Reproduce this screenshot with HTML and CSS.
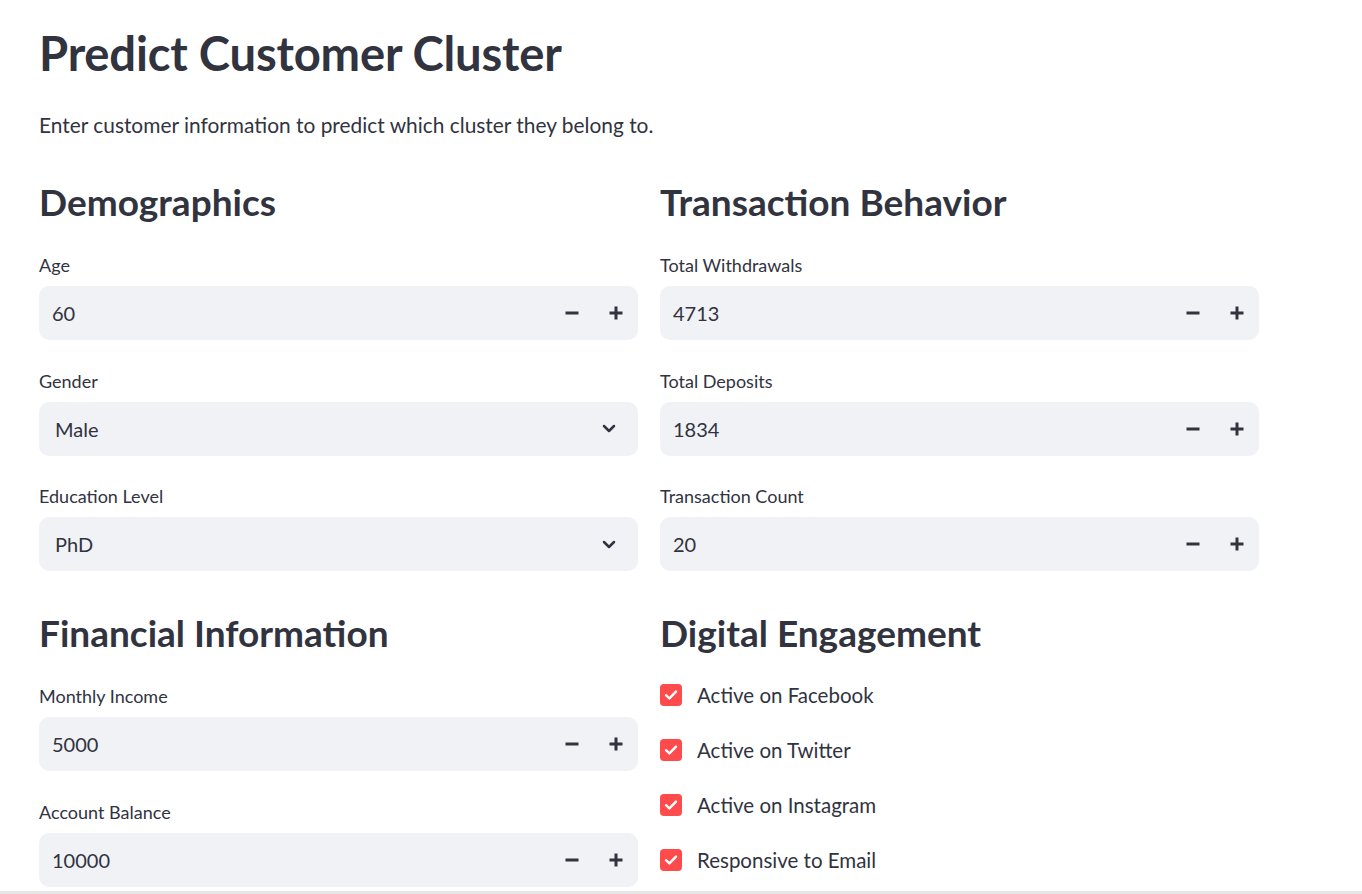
FILE: index.html
```html
<!DOCTYPE html>
<html lang="en">
<head>
<meta charset="utf-8">
<title>Predict Customer Cluster</title>
<link rel="stylesheet" href="styles.css">
</head>
<body>
<main class="main">
  <h1 class="title">Predict Customer Cluster</h1>
  <p class="intro">Enter customer information to predict which cluster they belong to.</p>

  <div class="grid">
    <section class="col">
      <h2 class="heading">Demographics</h2>
      <div class="field">
        <div class="label">Age</div>
        <div class="box num"><span class="val">60</span><span class="step"><svg width="14" height="14" viewBox="0 0 14 14"><rect x="0.5" y="5.5" width="13" height="3" fill="#31333F"/></svg></span><span class="step"><svg width="14" height="14" viewBox="0 0 14 14"><rect x="0.5" y="5.5" width="13" height="3" fill="#31333F"/><rect x="5.5" y="0.5" width="3" height="13" fill="#31333F"/></svg></span></div>
      </div>
      <div class="field">
        <div class="label">Gender</div>
        <div class="box sel"><span class="val">Male</span><span class="chev"><svg width="14" height="9" viewBox="0 0 14 9"><path d="M2 2 L7 7 L12 2" fill="none" stroke="#31333F" stroke-width="2.5" stroke-linecap="round" stroke-linejoin="round"/></svg></span></div>
      </div>
      <div class="field">
        <div class="label">Education Level</div>
        <div class="box sel"><span class="val">PhD</span><span class="chev"><svg width="14" height="9" viewBox="0 0 14 9"><path d="M2 2 L7 7 L12 2" fill="none" stroke="#31333F" stroke-width="2.5" stroke-linecap="round" stroke-linejoin="round"/></svg></span></div>
      </div>
    </section>

    <section class="col">
      <h2 class="heading">Transaction Behavior</h2>
      <div class="field">
        <div class="label">Total Withdrawals</div>
        <div class="box num"><span class="val">4713</span><span class="step"><svg width="14" height="14" viewBox="0 0 14 14"><rect x="0.5" y="5.5" width="13" height="3" fill="#31333F"/></svg></span><span class="step"><svg width="14" height="14" viewBox="0 0 14 14"><rect x="0.5" y="5.5" width="13" height="3" fill="#31333F"/><rect x="5.5" y="0.5" width="3" height="13" fill="#31333F"/></svg></span></div>
      </div>
      <div class="field">
        <div class="label">Total Deposits</div>
        <div class="box num"><span class="val">1834</span><span class="step"><svg width="14" height="14" viewBox="0 0 14 14"><rect x="0.5" y="5.5" width="13" height="3" fill="#31333F"/></svg></span><span class="step"><svg width="14" height="14" viewBox="0 0 14 14"><rect x="0.5" y="5.5" width="13" height="3" fill="#31333F"/><rect x="5.5" y="0.5" width="3" height="13" fill="#31333F"/></svg></span></div>
      </div>
      <div class="field">
        <div class="label">Transaction Count</div>
        <div class="box num"><span class="val">20</span><span class="step"><svg width="14" height="14" viewBox="0 0 14 14"><rect x="0.5" y="5.5" width="13" height="3" fill="#31333F"/></svg></span><span class="step"><svg width="14" height="14" viewBox="0 0 14 14"><rect x="0.5" y="5.5" width="13" height="3" fill="#31333F"/><rect x="5.5" y="0.5" width="3" height="13" fill="#31333F"/></svg></span></div>
      </div>
    </section>

    <section class="col row2">
      <h2 class="heading">Financial Information</h2>
      <div class="field">
        <div class="label">Monthly Income</div>
        <div class="box num"><span class="val">5000</span><span class="step"><svg width="14" height="14" viewBox="0 0 14 14"><rect x="0.5" y="5.5" width="13" height="3" fill="#31333F"/></svg></span><span class="step"><svg width="14" height="14" viewBox="0 0 14 14"><rect x="0.5" y="5.5" width="13" height="3" fill="#31333F"/><rect x="5.5" y="0.5" width="3" height="13" fill="#31333F"/></svg></span></div>
      </div>
      <div class="field">
        <div class="label">Account Balance</div>
        <div class="box num"><span class="val">10000</span><span class="step"><svg width="14" height="14" viewBox="0 0 14 14"><rect x="0.5" y="5.5" width="13" height="3" fill="#31333F"/></svg></span><span class="step"><svg width="14" height="14" viewBox="0 0 14 14"><rect x="0.5" y="5.5" width="13" height="3" fill="#31333F"/><rect x="5.5" y="0.5" width="3" height="13" fill="#31333F"/></svg></span></div>
      </div>
    </section>

    <section class="col row2">
      <h2 class="heading">Digital Engagement</h2>
      <div class="checks">
        <label class="check"><span class="cb"><svg width="14" height="12" viewBox="0 0 14 12"><path d="M2 6.2 L5.4 9.4 L12 2.6" fill="none" stroke="#fff" stroke-width="2.4" stroke-linecap="round" stroke-linejoin="round"/></svg></span><span class="ctext">Active on Facebook</span></label>
        <label class="check"><span class="cb"><svg width="14" height="12" viewBox="0 0 14 12"><path d="M2 6.2 L5.4 9.4 L12 2.6" fill="none" stroke="#fff" stroke-width="2.4" stroke-linecap="round" stroke-linejoin="round"/></svg></span><span class="ctext">Active on Twitter</span></label>
        <label class="check"><span class="cb"><svg width="14" height="12" viewBox="0 0 14 12"><path d="M2 6.2 L5.4 9.4 L12 2.6" fill="none" stroke="#fff" stroke-width="2.4" stroke-linecap="round" stroke-linejoin="round"/></svg></span><span class="ctext">Active on Instagram</span></label>
        <label class="check"><span class="cb"><svg width="14" height="12" viewBox="0 0 14 12"><path d="M2 6.2 L5.4 9.4 L12 2.6" fill="none" stroke="#fff" stroke-width="2.4" stroke-linecap="round" stroke-linejoin="round"/></svg></span><span class="ctext">Responsive to Email</span></label>
      </div>
    </section>
  </div>
</main>
<div class="edge"></div>
</body>
</html>
```

FILE: styles.css
```css
html, body {
  margin: 0;
  padding: 0;
  background: #ffffff;
}
body {
  font-family: Lato, "Noto Sans", sans-serif;
  color: #31333F;
  overflow: hidden;
  height: 894px;
}
.main {
  width: 1220px;
  padding: 0 0 0 39px;
}
.title {
  margin: 0;
  padding-top: 22px;
  font-size: 47.2px;
  font-weight: 700;
  line-height: 62px;
  letter-spacing: -0.2px;
}
.intro {
  margin: 0;
  padding-top: 26px;
  font-size: 20.9px;
  line-height: 30px;
}
.grid {
  display: grid;
  grid-template-columns: 599px 599px;
  column-gap: 22px;
  padding-top: 37px;
}
.row2 {
  margin-top: 37px;
}
.heading {
  margin: 0;
  font-size: 37px;
  font-weight: 700;
  line-height: 50px;
  height: 50px;
}
.field {
  margin-top: 26.5px;
}
.col .heading + .field {
  margin-top: 24px;
}
.label {
  font-size: 18px;
  line-height: 28px;
  height: 28px;
  margin-bottom: 7px;
}
.box {
  height: 54px;
  background: #F0F2F6;
  border-radius: 10px;
  display: flex;
  align-items: center;
  font-size: 20px;
}
.num .val {
  flex: 1;
  padding-left: 13px;
}
.sel .val {
  flex: 1;
  padding-left: 16px;
}
.step {
  width: 44px;
  height: 54px;
  display: flex;
  align-items: center;
  justify-content: center;
}
.chev {
  display: flex;
  align-items: center;
  justify-content: center;
  width: 14px;
  padding-right: 22px;
}
.chev svg { display: block; }
.step svg { display: block; }
.checks {
  display: flex;
  flex-direction: column;
  padding-top: 19px;
  gap: 20px;
}
.check {
  display: flex;
  align-items: center;
  height: 35px;
  font-size: 20.5px;
}
.cb {
  width: 22px;
  height: 22px;
  border-radius: 4px;
  background: #FF4B4B;
  display: flex;
  align-items: center;
  justify-content: center;
  margin-right: 15px;
}
.cb svg { display: block; }
.edge {
  position: fixed;
  left: 0;
  right: 0;
  bottom: 0;
  height: 3px;
  background: #E6E6E6;
}
```
